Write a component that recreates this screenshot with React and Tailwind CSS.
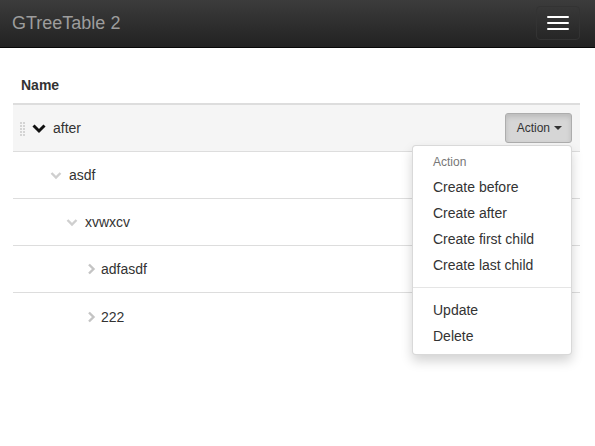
import React from "react";

const rows = [
  { name: "after", level: 0, open: true, active: true },
  { name: "asdf", level: 1, open: true },
  { name: "xvwxcv", level: 2, open: true },
  { name: "adfasdf", level: 3, open: false },
  { name: "222", level: 3, open: false },
];

const menuItems = ["Create before", "Create after", "Create first child", "Create last child"];

const Handle = () => (
  <svg width="6" height="16" viewBox="0 0 6 16" className="block">
    {[0, 3, 6, 9, 12].map((y) =>
      [0, 3].map((x) => <rect key={`${x}-${y}`} x={x} y={y + 1} width="2" height="2" fill="#d4d4d4" />)
    )}
  </svg>
);

const Chevron = ({ open, active }) => {
  if (open) {
    return (
      <svg width="14" height="14" viewBox="0 0 14 14" className="block">
        <path
          d={active ? "M1.5 4.5 L7 10 L12.5 4.5" : "M2.5 5 L7 9.5 L11.5 5"}
          fill="none"
          stroke={active ? "#111" : "#cfcfcf"}
          strokeWidth={active ? 3 : 2.4}
        />
      </svg>
    );
  }
  return (
    <svg width="14" height="14" viewBox="0 0 14 14" className="block">
      <path d="M5 2.5 L9.5 7 L5 11.5" fill="none" stroke="#c4c4c4" strokeWidth="2.4" />
    </svg>
  );
};

const App = () => {
  return (
    <div className="w-[595px] h-[446px] bg-white font-['Liberation_Sans',Arial,sans-serif] text-[#333] text-sm overflow-hidden">
      <div className="h-[48px] flex flex-row items-center px-3 bg-gradient-to-b from-[#3c3c3c] to-[#222] border-b border-[#080808]">
        <span className="text-[18px] text-[#9d9d9d]">GTreeTable 2</span>
        <span className="ms-auto"></span>
        <div className="flex flex-col gap-[4px] px-[10px] py-[9px] border border-[#333] rounded mr-[3px] mt-[-1px]">
          <span className="block w-[22px] h-[2px] bg-white rounded-[1px]" />
          <span className="block w-[22px] h-[2px] bg-white rounded-[1px]" />
          <span className="block w-[22px] h-[2px] bg-white rounded-[1px]" />
        </div>
      </div>

      <div className="px-[13px] pt-[19px]">
        <div className="w-[567px]">
          <div className="px-2 py-2 leading-5 font-bold border-b-2 border-[#ddd]">Name</div>
          {rows.map((row, index) => (
            <div
              key={index}
              className={`h-[47px] flex flex-row items-center px-2 ${
                index < rows.length - 1 ? "border-b border-[#ddd]" : ""
              } ${row.active ? "bg-[#f5f5f5]" : ""}`}
            >
              {row.active ? (
                <div className="w-[12px] shrink-0 -ml-[1px] pt-[1px]">
                  <Handle />
                </div>
              ) : (
                <div className="shrink-0" style={{ width: 12 + row.level * 16 }} />
              )}
              <div className={`shrink-0 ${row.open ? "" : "ml-[3px] -mr-[3px]"}`}>
                <Chevron open={row.open} active={row.active} />
              </div>
              <span className={`leading-5 ${row.active ? "ml-[7px]" : "ml-[6px]"}`}>{row.name}</span>
              {row.active && (
                <>
                  <span className="ms-auto"></span>
                  <div className="h-[30px] flex flex-row items-center gap-[4px] pl-[11px] pr-[9px] text-xs text-[#333] bg-[#d6d6d6] border border-[#adadad] rounded-[3px] shadow-[inset_0_3px_5px_rgba(0,0,0,0.125)]">
                    <span>Action</span>
                    <span className="w-0 h-0 border-t-4 border-t-[#333] border-x-4 border-x-transparent" />
                  </div>
                </>
              )}
            </div>
          ))}
        </div>
      </div>

      <div className="absolute left-[412px] top-[145px] w-[160px] bg-white border border-[rgba(0,0,0,0.15)] rounded shadow-[0_6px_12px_rgba(0,0,0,0.175)] py-[5px]">
        <div className="px-5 py-[3px] text-xs leading-[17px] text-[#777]">Action</div>
        {menuItems.map((item) => (
          <div key={item} className="px-5 py-[3px] leading-5 text-[#333]">
            {item}
          </div>
        ))}
        <div className="my-[9px] h-px bg-[#e5e5e5]" />
        <div className="px-5 py-[3px] leading-5 text-[#333]">Update</div>
        <div className="px-5 py-[3px] leading-5 text-[#333]">Delete</div>
      </div>
    </div>
  );
};

export default App;
